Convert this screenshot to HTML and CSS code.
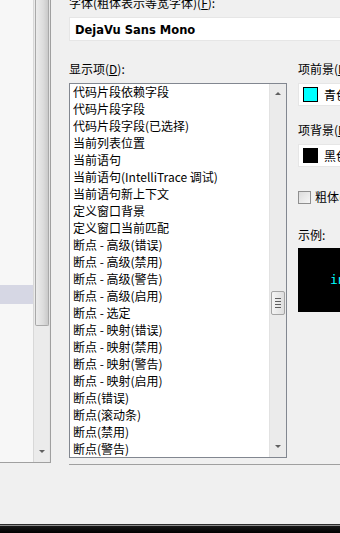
FILE: index.html
```html
<!DOCTYPE html>
<html>
  <head>
    <meta charset="UTF-8"/>
    <title>字体和颜色</title>
    <link rel="stylesheet" href="styles.css">
  </head>
  <body>
    <div class="window">
      <div class="nav">
        <div class="tree">
          <div class="tree-selected"></div>
        </div>
        <div class="vscroll nav-scroll">
          <div class="nav-thumb"></div>
          <div class="nav-track"></div>
          <div class="arrow arrow-down"></div>
        </div>
      </div>

      <div class="main">
        <div class="label font-label">字体(粗体表示等宽字体)(<u>F</u>):</div>
        <div class="combo font-combo">DejaVu Sans Mono</div>

        <div class="options">
          <div class="items-col">
            <div class="label">显示项(<u>D</u>):</div>
            <div class="listbox">
              <ul class="items">
                <li>代码片段依赖字段</li>
                <li>代码片段字段</li>
                <li>代码片段字段(已选择)</li>
                <li>当前列表位置</li>
                <li>当前语句</li>
                <li>当前语句(IntelliTrace 调试)</li>
                <li>当前语句新上下文</li>
                <li>定义窗口背景</li>
                <li>定义窗口当前匹配</li>
                <li>断点 - 高级(错误)</li>
                <li>断点 - 高级(禁用)</li>
                <li>断点 - 高级(警告)</li>
                <li>断点 - 高级(启用)</li>
                <li>断点 - 选定</li>
                <li>断点 - 映射(错误)</li>
                <li>断点 - 映射(禁用)</li>
                <li>断点 - 映射(警告)</li>
                <li>断点 - 映射(启用)</li>
                <li>断点(错误)</li>
                <li>断点(滚动条)</li>
                <li>断点(禁用)</li>
                <li>断点(警告)</li>
              </ul>
              <div class="vscroll list-scroll">
                <div class="arrow arrow-up"></div>
                <div class="list-thumb">
                  <span></span><span></span><span></span><span></span>
                </div>
                <div class="arrow arrow-down"></div>
              </div>
            </div>
          </div>

          <div class="color-col">
            <div class="label">项前景(<u>I</u>):</div>
            <div class="combo color-combo">
              <span class="swatch swatch-cyan"></span>青色
            </div>
            <div class="label spaced">项背景(<u>B</u>):</div>
            <div class="combo color-combo">
              <span class="swatch swatch-black"></span>黑色
            </div>
            <label class="check">
              <span class="checkbox"></span>粗体(<u>B</u>)
            </label>
            <div class="label sample-label">示例:</div>
            <div class="sample">int i = 0;</div>
          </div>
        </div>
      </div>
    </div>
    <div class="taskbar"></div>
  </body>
</html>
```

FILE: styles.css
```css
body {
  margin: 0;
  width: 340px;
  height: 533px;
  overflow: hidden;
  background-color: #f0f0f0;
  color: #000;
  font-family: 'Noto Sans CJK SC', 'Liberation Sans', sans-serif;
  font-size: 12px;
  line-height: 16px;
  display: flex;
  flex-direction: column;
}

u {
  text-decoration: underline;
  text-underline-offset: 1px;
}

.window {
  height: 524px;
  display: flex;
  align-items: flex-start;
}

/* left tree pane */
.nav {
  width: 50px;
  height: 462px;
  flex: none;
  display: flex;
  border-right: 1px solid #a0a0a0;
  border-bottom: 1px solid #a0a0a0;
  background-color: #f7f7f7;
}

.tree {
  width: 33px;
  padding-top: 285px;
}

.tree-selected {
  height: 19px;
  background-color: #d6d7e4;
}

.vscroll {
  width: 15px;
  flex: none;
  display: flex;
  flex-direction: column;
  align-items: center;
  background-color: #ebebeb;
  border-left: 1px solid #e2e2e2;
}

.nav-scroll {
  border-left: 1px solid #d8d8d8;
  border-right: 1px solid #e6e6e6;
}

.nav-thumb {
  width: 14px;
  height: 326px;
  box-sizing: border-box;
  border: 1px solid #a9a9a9;
  border-top: none;
  border-radius: 0 0 2px 2px;
  background: linear-gradient(to right, #ececec, #dcdcdc 60%, #c9c9c9);
}

.nav-track {
  flex: 1;
}

.arrow {
  width: 0;
  height: 0;
  border-left: 3px solid transparent;
  border-right: 3px solid transparent;
}

.arrow-down {
  border-top: 3px solid #606060;
  margin-bottom: 9px;
}

.arrow-up {
  border-bottom: 3px solid #606060;
  margin-top: 8px;
}

/* main area */
.main {
  flex: 1;
  min-width: 0;
  padding-left: 18px;
  overflow: hidden;
}

.label {
  white-space: nowrap;
}

.font-label {
  margin-top: -5px;
}

.combo {
  background-color: #fff;
  border: 1px solid #e6e6e6;
  box-sizing: border-box;
  white-space: nowrap;
}

.font-combo {
  width: 300px;
  height: 24px;
  margin-top: 6px;
  padding: 1px 0 0 5px;
  font-family: 'DejaVu Sans', sans-serif;
  font-weight: bold;
  font-size: 11.5px;
  line-height: 22px;
}

.options {
  display: flex;
  gap: 11px;
  margin-top: 20px;
  height: 403px;
  border-bottom: 1px solid #a0a0a0;
}

.items-col {
  width: 218px;
  flex: none;
}

.listbox {
  margin-top: 6px;
  height: 375px;
  box-sizing: border-box;
  border: 1px solid #828790;
  background-color: #fff;
  display: flex;
  overflow: hidden;
}

.items {
  list-style: none;
  margin: -1px 0 0;
  padding: 0 0 0 3px;
  flex: 1;
  min-width: 0;
}

.items li {
  height: 17px;
  line-height: 17px;
  white-space: nowrap;
}

.list-scroll {
  width: 16px;
}

.list-thumb {
  width: 14px;
  height: 24px;
  margin-top: 196px;
  margin-bottom: auto;
  box-sizing: border-box;
  border: 1px solid #a4a4a4;
  border-radius: 2px;
  background: linear-gradient(to right, #f4f4f4, #dedede);
  display: flex;
  flex-direction: column;
  align-items: center;
  justify-content: center;
  gap: 2px;
}

.list-thumb span {
  width: 6px;
  height: 1px;
  background-color: #5e5e5e;
}

.list-scroll .arrow-down {
  margin-bottom: 9px;
}

/* colour column */
.color-col {
  flex: 1;
}

.color-combo {
  width: 80px;
  height: 23px;
  margin-top: 6px;
  padding-left: 4px;
  display: flex;
  align-items: center;
  gap: 6px;
}

.spaced {
  margin-top: 16px;
}

.swatch {
  width: 13px;
  height: 13px;
  border: 1px solid #000;
}

.swatch-cyan {
  background-color: #00ffff;
}

.swatch-black {
  background-color: #000;
}

.check {
  display: flex;
  align-items: center;
  gap: 4px;
  margin-top: 22px;
  white-space: nowrap;
}

.checkbox {
  width: 11px;
  height: 11px;
  border: 1px solid #8f8f8f;
  background: linear-gradient(135deg, #dcdcdc, #f6f6f6);
}

.sample-label {
  margin-top: 22px;
}

.sample {
  margin-top: 5px;
  height: 64px;
  width: 80px;
  background-color: #000;
  color: #00ffff;
  font-family: 'DejaVu Sans Mono', monospace;
  font-size: 13px;
  line-height: 64px;
  padding-left: 32px;
  white-space: nowrap;
}

.taskbar {
  height: 9px;
  box-sizing: border-box;
  border-top: 1px solid #2b2b2b;
  box-shadow: inset 0 1px 0 #8c8c8c;
  background: linear-gradient(to bottom, #1a1a1a, #000);
}
```
